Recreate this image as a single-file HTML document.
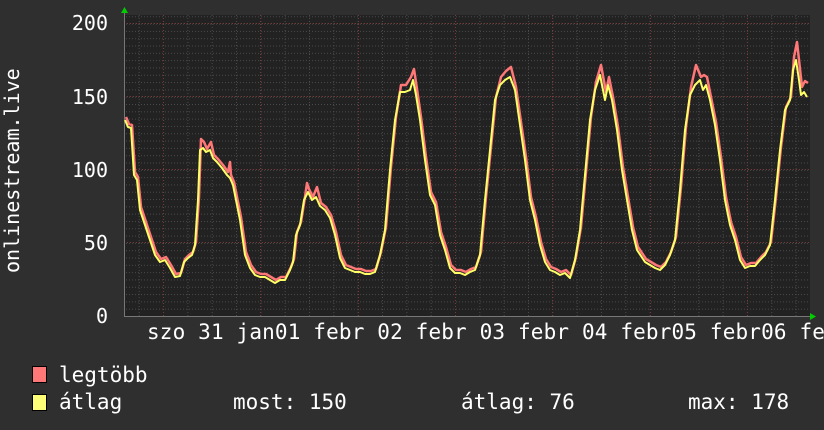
<!DOCTYPE html>
<html><head><meta charset="utf-8"><style>
body{margin:0;width:824px;height:430px;background:#2f2f2f;overflow:hidden;}
svg{display:block}
text{font-family:"DejaVu Sans Mono","Liberation Mono",monospace;fill:#fff;}
</style></head><body>
<svg width="824" height="430" viewBox="0 0 824 430" xmlns="http://www.w3.org/2000/svg">
<defs>
<pattern id="hg" x="0" y="316" width="824" height="7.31" patternUnits="userSpaceOnUse">
<line x1="0" y1="0.5" x2="824" y2="0.5" stroke="#4a4a4a" stroke-width="1" stroke-dasharray="1,2"/></pattern>
<pattern id="vg" x="138.7" y="0" width="24.33" height="430" patternUnits="userSpaceOnUse">
<line x1="0.5" y1="0" x2="0.5" y2="430" stroke="#4a4a4a" stroke-width="1" stroke-dasharray="1,2"/></pattern>
</defs>
<rect x="124" y="15" width="686" height="301" fill="#222"/>
<rect x="124" y="15" width="686" height="301" fill="url(#hg)"/>
<rect x="124" y="15" width="686" height="301" fill="url(#vg)"/>
<g stroke="#7a3a3a" stroke-width="1" stroke-dasharray="1,2">
<line x1="124" y1="23.5" x2="810" y2="23.5"/><line x1="124" y1="96.5" x2="810" y2="96.5"/>
<line x1="124" y1="169.5" x2="810" y2="169.5"/><line x1="124" y1="242.5" x2="810" y2="242.5"/>
<line x1="163.5" y1="15" x2="163.5" y2="316"/><line x1="260.5" y1="15" x2="260.5" y2="316"/>
<line x1="358.5" y1="15" x2="358.5" y2="316"/><line x1="455.5" y1="15" x2="455.5" y2="316"/>
<line x1="552.5" y1="15" x2="552.5" y2="316"/><line x1="650.5" y1="15" x2="650.5" y2="316"/>
<line x1="747.5" y1="15" x2="747.5" y2="316"/>
</g>
<line x1="124" y1="316.5" x2="812" y2="316.5" stroke="#777"/>
<line x1="124.5" y1="12" x2="124.5" y2="316" stroke="#777"/>
<polygon points="121,13 124.5,7 128,13" fill="#0c0"/>
<polygon points="810,313 816,316.5 810,320" fill="#0c0"/>
<g fill="none" stroke-linejoin="round">
<polyline transform="translate(1,-3)" stroke="#ff7777" stroke-width="2.5" points="125,120 128,127 131,128 134,175 137,180 140,210 145,225 150,240 155,255 160,262 165,260 170,268 175,277 180,276 184,262 188,258 192,255 195,245 198,200 200,142 203,145 206,152 210,145 213,158 217,162 222,168 227,175 229,165 230,178 233,185 236,200 240,220 245,255 250,268 255,275 260,277 265,277 270,280 275,283 280,280 285,280 290,270 293,262 296,235 300,225 304,200 306,186 308,192 312,200 316,190 320,206 325,210 330,218 335,235 340,258 345,268 350,270 355,272 360,272 365,274 370,274 375,272 380,255 385,230 390,170 395,120 400,88 405,88 410,80 413,72 416,92 420,120 425,160 430,195 435,205 440,235 445,250 450,268 455,273 460,273 465,275 470,272 475,270 480,255 485,200 490,150 495,100 500,80 505,74 510,70 515,90 520,125 525,160 530,200 535,220 540,245 545,262 550,270 555,272 560,275 565,273 570,278 575,260 580,230 585,175 590,120 595,85 600,68 605,95 608,80 612,100 617,130 622,170 627,200 632,230 637,250 645,262 650,265 655,268 660,270 665,265 670,255 675,240 680,190 685,130 690,90 695,68 700,80 703,78 706,80 710,100 715,125 720,160 725,200 730,225 735,240 740,260 745,268 750,266 755,266 760,260 765,255 770,245 775,200 780,150 785,110 790,100 793,60 796,45 799,72 801,90 804,84 807,86"/>
<polyline stroke="#ffff66" stroke-width="2" points="125,120 128,127 131,128 134,175 137,180 140,210 145,225 150,240 155,255 160,262 165,260 170,268 175,277 180,276 184,262 188,258 192,255 195,245 198,200 200,150 203,148 206,152 210,150 213,158 217,162 222,168 227,175 230,178 233,185 236,200 240,220 245,255 250,268 255,275 260,277 265,277 270,280 275,283 280,280 285,280 290,270 293,262 296,235 300,225 304,200 308,192 312,200 316,197 320,206 325,210 330,218 335,235 340,258 345,268 350,270 355,272 360,272 365,274 370,274 375,272 380,255 385,230 390,170 395,120 400,92 405,92 410,90 413,80 416,95 420,120 425,160 430,195 435,205 440,235 445,250 450,268 455,273 460,273 465,275 470,272 475,270 480,255 485,200 490,150 495,100 500,85 505,80 510,77 515,90 520,125 525,160 530,200 535,220 540,245 545,262 550,270 555,272 560,275 565,273 570,278 575,260 580,230 585,175 590,120 595,90 600,75 605,100 608,85 612,100 617,130 622,170 627,200 632,230 637,250 645,262 650,265 655,268 660,270 665,265 670,255 675,240 680,190 685,130 690,95 695,85 700,80 703,90 706,85 710,100 715,125 720,160 725,200 730,225 735,240 740,260 745,268 750,266 755,266 760,260 765,255 770,245 775,200 780,150 785,110 790,100 793,70 796,60 799,80 801,95 804,92 807,97"/>
</g>
<g font-size="20" text-anchor="end">
<text x="108" y="30">200</text><text x="108" y="104">150</text>
<text x="108" y="177">100</text><text x="108" y="250">50</text><text x="108" y="323">0</text>
</g>
<text x="147" y="339" font-size="21" letter-spacing="0.15">szo 31 jan01 febr 02 febr 03 febr 04 febr05 febr06 fe</text>
<text transform="translate(19,273) rotate(-90)" font-size="20">onlinestream.live</text>
<rect x="32.5" y="366.5" width="14" height="16" fill="#ff7777" stroke="#000"/>
<rect x="32.5" y="394.5" width="14" height="16" fill="#ffff77" stroke="#000"/>
<g font-size="21">
<text x="59" y="382">legtöbb</text>
<text x="59" y="409">átlag</text>
<text x="233" y="409">most: 150</text>
<text x="461" y="409">átlag: 76</text>
<text x="688" y="409">max: 178</text>
</g>
</svg>
</body></html>
